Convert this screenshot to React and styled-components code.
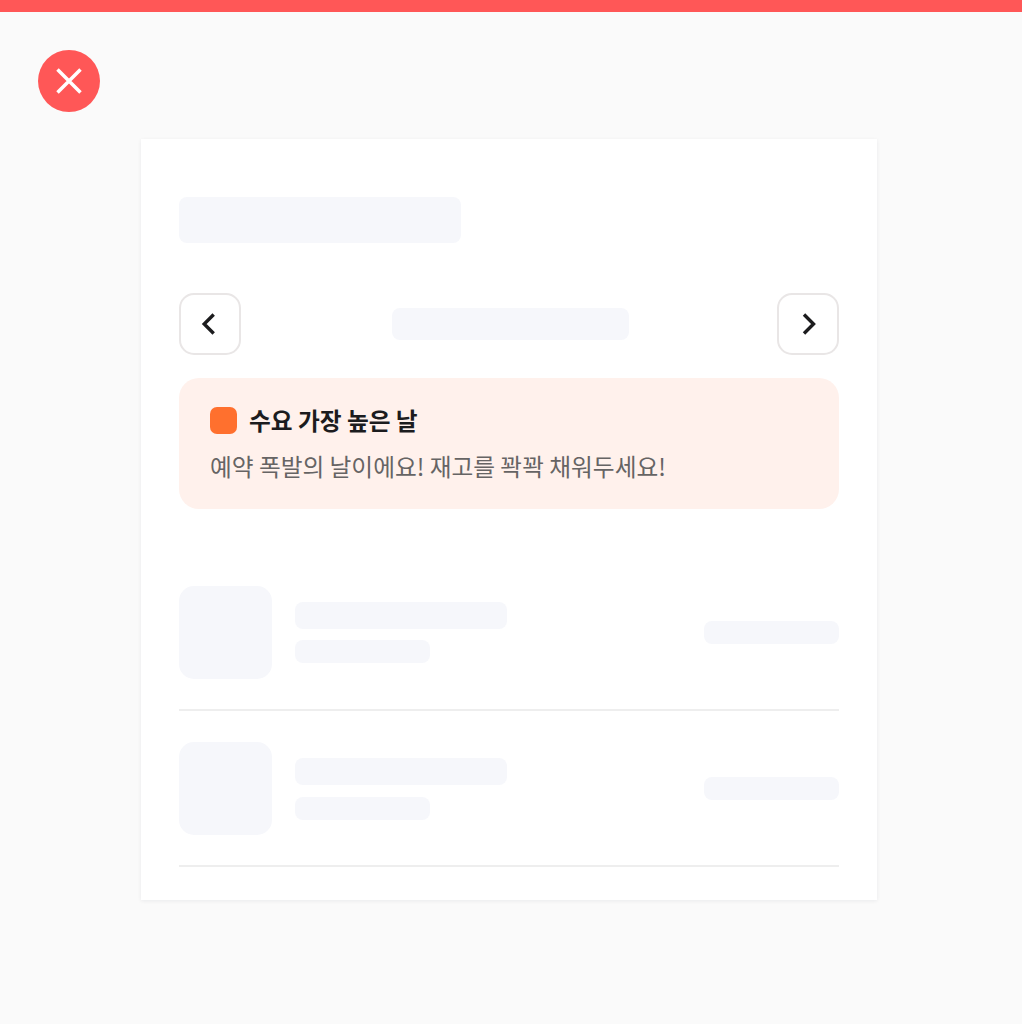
import React from "react";
import styled, { createGlobalStyle } from "styled-components";

const Global = createGlobalStyle`
  html, body { margin: 0; padding: 0; background: #fafafa; }
  body { font-family: "Noto Sans CJK KR", "Noto Sans", sans-serif; }
`;

const Page = styled.div`
  height: 1024px;
  background: #fafafa;
  overflow: hidden;
`;
const TopBar = styled.div`
  height: 11.5px;
  background: #ff5757;
`;
const Stage = styled.div`
  position: relative;
  display: flex;
  justify-content: center;
  padding-top: 127.5px;
  padding-right: 4px;
`;
const CloseBadge = styled.div`
  position: absolute;
  left: 38.4px;
  top: 38.5px;
  width: 62px;
  height: 62px;
  border-radius: 50%;
  background: #ff5757;
  display: flex;
  align-items: center;
  justify-content: center;
`;
const Card = styled.div`
  width: 736px;
  box-sizing: border-box;
  height: 761px;
  padding: 58px 38px 0 38.4px;
  background: #fff;
  box-shadow: 0 1px 4px rgba(20, 30, 60, 0.07);
`;
const Skeleton = styled.div`
  background: #f6f7fb;
  width: ${(p) => p.$w}px;
  height: ${(p) => p.$h}px;
  border-radius: ${(p) => p.$r || 8}px;
  flex: none;
`;
const NavLabel = styled(Skeleton)`
  margin-left: 2px;
`;
const Nav = styled.div`
  margin-top: 50px;
  height: 62px;
  display: flex;
  align-items: center;
  justify-content: space-between;
`;
const NavButton = styled.div`
  width: 62px;
  height: 62px;
  box-sizing: border-box;
  border: 2px solid #e9e6e6;
  border-radius: 15px;
  background: #fff;
  display: flex;
  align-items: center;
  justify-content: center;
`;
const Alert = styled.div`
  margin-top: 23px;
  height: 131px;
  box-sizing: border-box;
  padding: 27px 31px 0 30.6px;
  background: #fff1ec;
  border-radius: 20px;
`;
const AlertHead = styled.div`
  display: flex;
  align-items: center;
  gap: 12px;
  height: 31px;
`;
const Swatch = styled.div`
  width: 27px;
  height: 27px;
  border-radius: 7px;
  background: #ff702e;
`;
const AlertTitle = styled.div`
  font-size: 23.7px;
  font-weight: 700;
  color: #1c1c1e;
  line-height: 31px;
  white-space: nowrap;
`;
const AlertText = styled.div`
  margin-top: 15px;
  font-size: 23.7px;
  font-weight: 400;
  color: #666464;
  line-height: 31px;
  white-space: nowrap;
`;
const List = styled.div`
  margin-top: 77px;
`;
const Row = styled.div`
  display: flex;
  align-items: center;
  padding-bottom: 30px;
  margin-bottom: 31.3px;
  border-bottom: 2px solid #eeeeee;
  &:last-child { margin-bottom: 0; }
`;
const Lines = styled.div`
  margin-left: 23px;
  flex: 1;
  display: flex;
  flex-direction: column;
  gap: 11.7px;
`;

const Item = () => (
  <Row>
    <Skeleton $w={92.3} $h={93} $r={15} />
    <Lines>
      <Skeleton $w={212} $h={27} />
      <Skeleton $w={135} $h={23} />
    </Lines>
    <Skeleton $w={135} $h={23} />
  </Row>
);

export default function App() {
  return (
    <Page>
      <Global />
      <TopBar />
      <Stage>
        <CloseBadge>
          <svg width="30" height="30" viewBox="0 0 30 30" fill="none" stroke="#fff" strokeWidth="3.5">
            <path d="M3.5 3.5 L26.5 26.5 M26.5 3.5 L3.5 26.5" />
          </svg>
        </CloseBadge>
        <Card>
          <Skeleton $w={281.6} $h={46} />
          <Nav>
            <NavButton>
              <svg width="24" height="24" viewBox="0 0 24 24" fill="none" stroke="#1c1c1e" strokeWidth="3.4">
                <path d="M15.7 2.5 L6.2 12 L15.7 21.5" />
              </svg>
            </NavButton>
            <NavLabel $w={237} $h={32} />
            <NavButton>
              <svg width="24" height="24" viewBox="0 0 24 24" fill="none" stroke="#1c1c1e" strokeWidth="3.4">
                <path d="M8 2.5 L17.5 12 L8 21.5" />
              </svg>
            </NavButton>
          </Nav>
          <Alert>
            <AlertHead>
              <Swatch />
              <AlertTitle>수요 가장 높은 날</AlertTitle>
            </AlertHead>
            <AlertText>예약 폭발의 날이에요! 재고를 꽉꽉 채워두세요!</AlertText>
          </Alert>
          <List>
            <Item />
            <Item />
          </List>
        </Card>
      </Stage>
    </Page>
  );
}
